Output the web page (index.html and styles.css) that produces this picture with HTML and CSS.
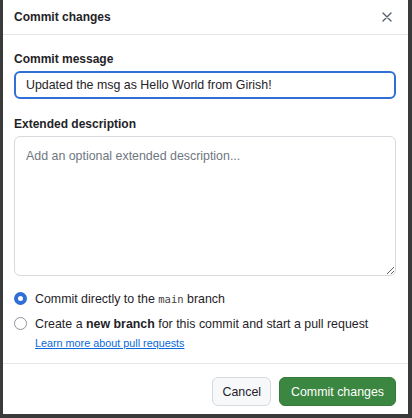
FILE: index.html
```html
<!DOCTYPE html>
<html lang="en">
<head>
    <meta charset="UTF-8">
    <meta name="viewport" content="width=device-width, initial-scale=1.0">
    <title>Commit changes</title>
    <link rel="stylesheet" href="styles.css">
</head>
<body>

<div class="dialog">
    <div class="dialog-header">
        <h2>Commit changes</h2>
        <button class="close-btn" aria-label="Close">
            <svg width="12" height="12" viewBox="0 0 12 12">
                <path d="M2 2 L10 10 M10 2 L2 10" stroke="#57606a" stroke-width="1.4" stroke-linecap="round"/>
            </svg>
        </button>
    </div>

    <div class="dialog-body">
        <label class="field-label" for="commit-msg">Commit message</label>
        <input type="text" id="commit-msg" class="msg-input" value="Updated the msg as Hello World from Girish!">

        <label class="field-label" for="commit-desc">Extended description</label>
        <textarea id="commit-desc" class="desc-input" placeholder="Add an optional extended description..."></textarea>

        <div class="choices">
            <label class="choice">
                <span class="radio checked"></span>
                <span>Commit directly to the <code>main</code> branch</span>
            </label>
            <label class="choice">
                <span class="radio"></span>
                <span>Create a <strong>new branch</strong> for this commit and start a pull request</span>
            </label>
            <a href="#" class="learn-link">Learn more about pull requests</a>
        </div>
    </div>

    <div class="dialog-footer">
        <button class="btn">Cancel</button>
        <button class="btn btn-primary">Commit changes</button>
    </div>
</div>

</body>
</html>
```

FILE: styles.css
```css
body {
    margin: 0;
    background: #3a3a3a;
    font-family: 'Liberation Sans', Arial, sans-serif;
    color: #1f2328;
}
.dialog {
    background: #fff;
    margin: 0 4px 4px 3px;
    height: 414px;
    display: flex;
    flex-direction: column;
}
.dialog-header {
    height: 35px;
    border-bottom: 1px solid #e4e6e9;
    display: flex;
    align-items: center;
    justify-content: space-between;
    padding: 0 14px 0 11px;
    box-sizing: border-box;
}
.dialog-header h2 {
    margin: 0;
    font-size: 12px;
    font-weight: 700;
}
.close-btn {
    border: none;
    background: transparent;
    padding: 0;
    width: 14px;
    height: 14px;
    display: flex;
    align-items: center;
    justify-content: center;
}
.dialog-body {
    padding: 17px 12px 0 11px;
    flex: 1;
    display: flex;
    flex-direction: column;
}
.field-label {
    font-size: 12px;
    font-weight: 700;
    margin-bottom: 5px;
}
.msg-input {
    height: 28px;
    box-sizing: border-box;
    border: 2px solid #2f6fd6;
    border-radius: 6px;
    padding: 0 10px;
    font-family: inherit;
    font-size: 12.4px;
    color: #1f2328;
    margin-bottom: 18px;
    outline: none;
}
.desc-input {
    height: 140px;
    box-sizing: border-box;
    border: 1px solid #d6d9dd;
    border-radius: 6px;
    padding: 12px 11px;
    font-family: inherit;
    font-size: 12.4px;
    resize: vertical;
    margin: 0 0 10px;
}
.desc-input::placeholder {
    color: #6e7781;
}
.choices {
    display: flex;
    flex-direction: column;
    font-size: 12.4px;
}
.choice {
    display: flex;
    align-items: center;
    gap: 8px;
    height: 25px;
}
.radio {
    width: 13px;
    height: 13px;
    border: 1px solid #8c959f;
    border-radius: 50%;
    box-sizing: border-box;
    flex-shrink: 0;
}
.radio.checked {
    border: 4px solid #2f6fd6;
}
.choice code {
    font-family: 'DejaVu Sans Mono', 'Liberation Mono', monospace;
    font-size: 10.5px;
    color: #444;
}
.choice strong {
    font-weight: 700;
}
.learn-link {
    font-size: 10.8px;
    color: #0969da;
    margin-left: 21px;
    margin-top: 1px;
}
.dialog-footer {
    border-top: 1px solid #e4e6e9;
    height: 51px;
    box-sizing: border-box;
    display: flex;
    justify-content: flex-end;
    align-items: flex-start;
    gap: 8px;
    padding: 13px 12px 0;
}
.btn {
    height: 29px;
    padding: 0 9px;
    border: 1px solid #d6d9dd;
    border-radius: 6px;
    background: #f6f8fa;
    font-family: inherit;
    font-size: 12.4px;
    color: #1f2328;
}
.btn-primary {
    background: #3b8640;
    border-color: #357a3a;
    color: #fff;
    padding: 0 11px;
}
```
